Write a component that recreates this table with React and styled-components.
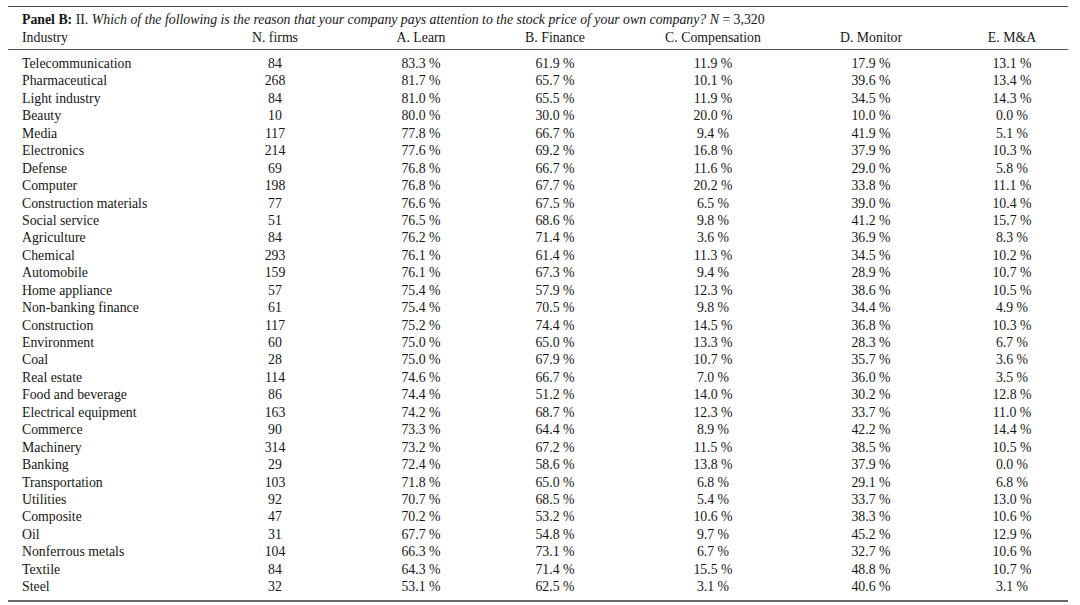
import React from "react";
import styled, { createGlobalStyle } from "styled-components";

const Global = createGlobalStyle`
  html, body { margin: 0; padding: 0; background: #ffffff; }
  body { font-family: "Liberation Serif", "DejaVu Serif", serif; color: #161616; }
`;

const rows = [
  ["Telecommunication", "84", "83.3 %", "61.9 %", "11.9 %", "17.9 %", "13.1 %"],
  ["Pharmaceutical", "268", "81.7 %", "65.7 %", "10.1 %", "39.6 %", "13.4 %"],
  ["Light industry", "84", "81.0 %", "65.5 %", "11.9 %", "34.5 %", "14.3 %"],
  ["Beauty", "10", "80.0 %", "30.0 %", "20.0 %", "10.0 %", "0.0 %"],
  ["Media", "117", "77.8 %", "66.7 %", "9.4 %", "41.9 %", "5.1 %"],
  ["Electronics", "214", "77.6 %", "69.2 %", "16.8 %", "37.9 %", "10.3 %"],
  ["Defense", "69", "76.8 %", "66.7 %", "11.6 %", "29.0 %", "5.8 %"],
  ["Computer", "198", "76.8 %", "67.7 %", "20.2 %", "33.8 %", "11.1 %"],
  ["Construction materials", "77", "76.6 %", "67.5 %", "6.5 %", "39.0 %", "10.4 %"],
  ["Social service", "51", "76.5 %", "68.6 %", "9.8 %", "41.2 %", "15.7 %"],
  ["Agriculture", "84", "76.2 %", "71.4 %", "3.6 %", "36.9 %", "8.3 %"],
  ["Chemical", "293", "76.1 %", "61.4 %", "11.3 %", "34.5 %", "10.2 %"],
  ["Automobile", "159", "76.1 %", "67.3 %", "9.4 %", "28.9 %", "10.7 %"],
  ["Home appliance", "57", "75.4 %", "57.9 %", "12.3 %", "38.6 %", "10.5 %"],
  ["Non-banking finance", "61", "75.4 %", "70.5 %", "9.8 %", "34.4 %", "4.9 %"],
  ["Construction", "117", "75.2 %", "74.4 %", "14.5 %", "36.8 %", "10.3 %"],
  ["Environment", "60", "75.0 %", "65.0 %", "13.3 %", "28.3 %", "6.7 %"],
  ["Coal", "28", "75.0 %", "67.9 %", "10.7 %", "35.7 %", "3.6 %"],
  ["Real estate", "114", "74.6 %", "66.7 %", "7.0 %", "36.0 %", "3.5 %"],
  ["Food and beverage", "86", "74.4 %", "51.2 %", "14.0 %", "30.2 %", "12.8 %"],
  ["Electrical equipment", "163", "74.2 %", "68.7 %", "12.3 %", "33.7 %", "11.0 %"],
  ["Commerce", "90", "73.3 %", "64.4 %", "8.9 %", "42.2 %", "14.4 %"],
  ["Machinery", "314", "73.2 %", "67.2 %", "11.5 %", "38.5 %", "10.5 %"],
  ["Banking", "29", "72.4 %", "58.6 %", "13.8 %", "37.9 %", "0.0 %"],
  ["Transportation", "103", "71.8 %", "65.0 %", "6.8 %", "29.1 %", "6.8 %"],
  ["Utilities", "92", "70.7 %", "68.5 %", "5.4 %", "33.7 %", "13.0 %"],
  ["Composite", "47", "70.2 %", "53.2 %", "10.6 %", "38.3 %", "10.6 %"],
  ["Oil", "31", "67.7 %", "54.8 %", "9.7 %", "45.2 %", "12.9 %"],
  ["Nonferrous metals", "104", "66.3 %", "73.1 %", "6.7 %", "32.7 %", "10.6 %"],
  ["Textile", "84", "64.3 %", "71.4 %", "15.5 %", "48.8 %", "10.7 %"],
  ["Steel", "32", "53.1 %", "62.5 %", "3.1 %", "40.6 %", "3.1 %"],
];

const headers = ["Industry", "N. firms", "A. Learn", "B. Finance", "C. Compensation", "D. Monitor", "E. M&A"];

const COLS = "170px 194px 98px 170px 146px 170px 112px";

const Page = styled.div`
  padding: 6px 0 0 8px;
  width: 1060px;
`;

const Table = styled.div`
  border-top: 1.5px solid #4a4a4a;
  border-bottom: 2px solid #6a6a6a;
  font-size: 13.8px;
`;

const Head = styled.div`
  padding-top: 3.5px;
  padding-bottom: 2.5px;
  border-bottom: 1.5px solid #555;
`;

const Caption = styled.div`
  padding-left: 14px;
  line-height: 18px;
  white-space: nowrap;
`;

const Bold = styled.b`
  font-weight: 700;
`;

const Ital = styled.i`
  font-style: italic;
`;

const Row = styled.div`
  display: grid;
  grid-template-columns: ${COLS};
  line-height: ${(p) => p.$h}px;
  white-space: nowrap;
`;

const Cell = styled.div`
  text-align: ${(p) => (p.$first ? "left" : "center")};
  padding-left: ${(p) => (p.$first ? "14px" : "0")};
`;

const Body = styled.div`
  padding-top: 5px;
  padding-bottom: 4px;
`;

export default function App() {
  return (
    <>
      <Global />
      <Page>
        <Table>
          <Head>
            <Caption>
              <Bold>Panel B:</Bold> II.{" "}
              <Ital>
                Which of the following is the reason that your company pays attention to the stock price of your own
                company? N
              </Ital>{" "}
              = 3,320
            </Caption>
            <Row $h={18}>
              {headers.map((h, i) => (
                <Cell key={h} $first={i === 0}>
                  {h}
                </Cell>
              ))}
            </Row>
          </Head>
          <Body>
            {rows.map((r) => (
              <Row key={r[0]} $h={17.43}>
                {r.map((c, i) => (
                  <Cell key={i} $first={i === 0}>
                    {c}
                  </Cell>
                ))}
              </Row>
            ))}
          </Body>
        </Table>
      </Page>
    </>
  );
}
